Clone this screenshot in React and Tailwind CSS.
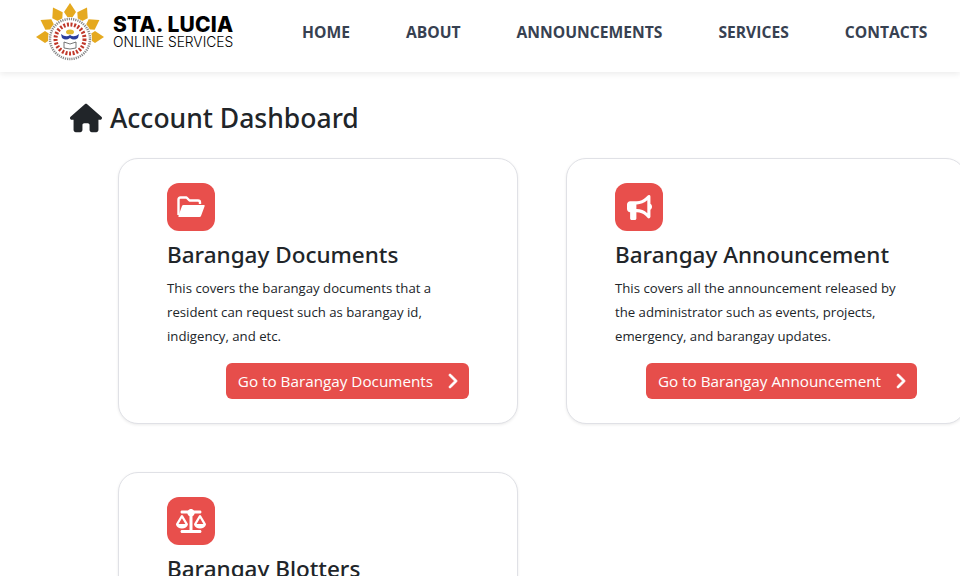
import React from 'react';
import { FaHouse, FaBullhorn, FaScaleBalanced, FaChevronRight } from 'react-icons/fa6';

const FONT = "font-['Open_Sans','Noto_Sans',sans-serif]";
const HEADING = "font-['Noto_Sans','Open_Sans',sans-serif] font-medium";

function FolderIcon() {
  return (
    <svg width="28" height="22" viewBox="0 0 28 22" fill="none">
      <path d="M1.5 19 V3.5 Q1.5 1.5 3.5 1.5 H9.5 L12.5 4.5 H21 Q23 4.5 23 6.5 V8" stroke="#fff" strokeWidth="2.4" strokeLinejoin="round" />
      <path d="M6.5 9 H27 Q28 9 27.6 10.2 L24 20 Q23.6 21 22.5 21 H2 Q1 21 1.4 20 L5 10 Q5.4 9 6.5 9 Z" fill="#fff" />
    </svg>
  );
}

const cards = [
  {
    title: 'Barangay Documents',
    text: ['This covers the barangay documents that a', 'resident can request such as barangay id,', 'indigency, and etc.'],
    button: 'Go to Barangay Documents',
    icon: <FolderIcon />,
  },
  {
    title: 'Barangay Announcement',
    text: ['This covers all the announcement released by', 'the administrator such as events, projects,', 'emergency, and barangay updates.'],
    button: 'Go to Barangay Announcement',
    icon: <FaBullhorn className="text-[25px]" />,
  },
  {
    title: 'Barangay Blotters',
    text: ['This covers the barangay blotters that a', 'resident can file such as complaints,', 'incidents, and etc.'],
    button: 'Go to Barangay Blotters',
    icon: <FaScaleBalanced className="text-[30px]" />,
  },
];

function Logo() {
  return (
    <svg width="70" height="62" viewBox="0 0 70 62" className="shrink-0 blur-[0.4px]">
      {[-90, -60, -30, 0, 30, 60, 90].map((a) => (
        <polygon key={a} points="35,3 41,12 35,21 29,12" fill="#e5a91f" transform={`rotate(${a} 35 37)`} />
      ))}
      <circle cx="35" cy="39" r="22" fill="#fff" />
      <circle cx="35" cy="39" r="20" fill="none" stroke="#888" strokeWidth="2.5" strokeDasharray="1.2 1" />
      <circle cx="35" cy="39" r="14.5" fill="none" stroke="#c0392b" strokeWidth="4" strokeDasharray="2 1.6" />
      <ellipse cx="35" cy="32" rx="4" ry="2.5" fill="#e5b92f" />
      <path d="M26 34 Q31 38 35 35 Q39 38 44 34 L43 38 Q39 41 35 38 Q31 41 27 38 Z" fill="#2c3e9e" />
      <path d="M29 42 L35 44 L41 42 L41 48 L35 49 L29 48 Z" fill="#fff" stroke="#555" strokeWidth="0.8" />
    </svg>
  );
}

function Card({ card }) {
  return (
    <div className="w-[400px] h-[266px] rounded-[20px] border border-[#e0e1e6] bg-white px-12 pt-6 shadow-[0_1px_3px_rgba(0,0,0,0.08)] flex flex-col">
      <div className="w-12 h-12 rounded-xl bg-[#e84f4c] text-white flex items-center justify-center">
        {card.icon}
      </div>
      <h2 className={`text-[22.5px] leading-[32px] mt-2 text-[#212529] ${HEADING}`}>{card.title}</h2>
      <div className="text-[13.2px] leading-6 mt-[5px] text-[#212529]">
        {card.text.map((line) => <div key={line} className="whitespace-nowrap">{line}</div>)}
      </div>
      <div className="flex justify-end mt-[15px]">
        <button className="h-9 pl-3 pr-[9px] rounded-md bg-[#e64e4b] text-white text-[15.25px] flex items-center whitespace-nowrap">
          {card.button}
          <FaChevronRight className="ml-[11px] text-[16px] stroke-[30px]" />
        </button>
      </div>
    </div>
  );
}

export default function App() {
  return (
    <div className={`h-[576px] w-[960px] overflow-hidden bg-white ${FONT}`}>
      <header className="h-[72px] flex items-start bg-white shadow-[0_2px_6px_rgba(0,0,0,0.08)] pl-[35px]">
        <Logo />
        <div className="ml-2 mt-[15px] w-[125px] font-['Inter',sans-serif] text-black">
          <div className="text-[21px] leading-[20px] font-extrabold tracking-[0.2px] whitespace-nowrap">STA. LUCIA</div>
          <div className="text-[13.8px] leading-[14px] font-light whitespace-nowrap">ONLINE SERVICES</div>
        </div>
        <nav className="ml-[64px] mt-[21px] flex gap-14 text-[15.65px] font-bold text-[#374151] whitespace-nowrap">
          <a>HOME</a>
          <a>ABOUT</a>
          <a>ANNOUNCEMENTS</a>
          <a>SERVICES</a>
          <a>CONTACTS</a>
        </nav>
      </header>
      <main>
        <div className="flex items-center pl-[70px] pt-[28px] pb-[22px]">
          <FaHouse className="text-[32px] text-[#212529]" />
          <h1 className={`ml-2 text-[26.5px] leading-9 text-[#212529] ${HEADING}`}>Account Dashboard</h1>
        </div>
        <div className="pl-[118px] grid grid-cols-[400px_400px] gap-12 w-[1000px]">
          {cards.map((c) => <Card key={c.title} card={c} />)}
        </div>
      </main>
    </div>
  );
}
